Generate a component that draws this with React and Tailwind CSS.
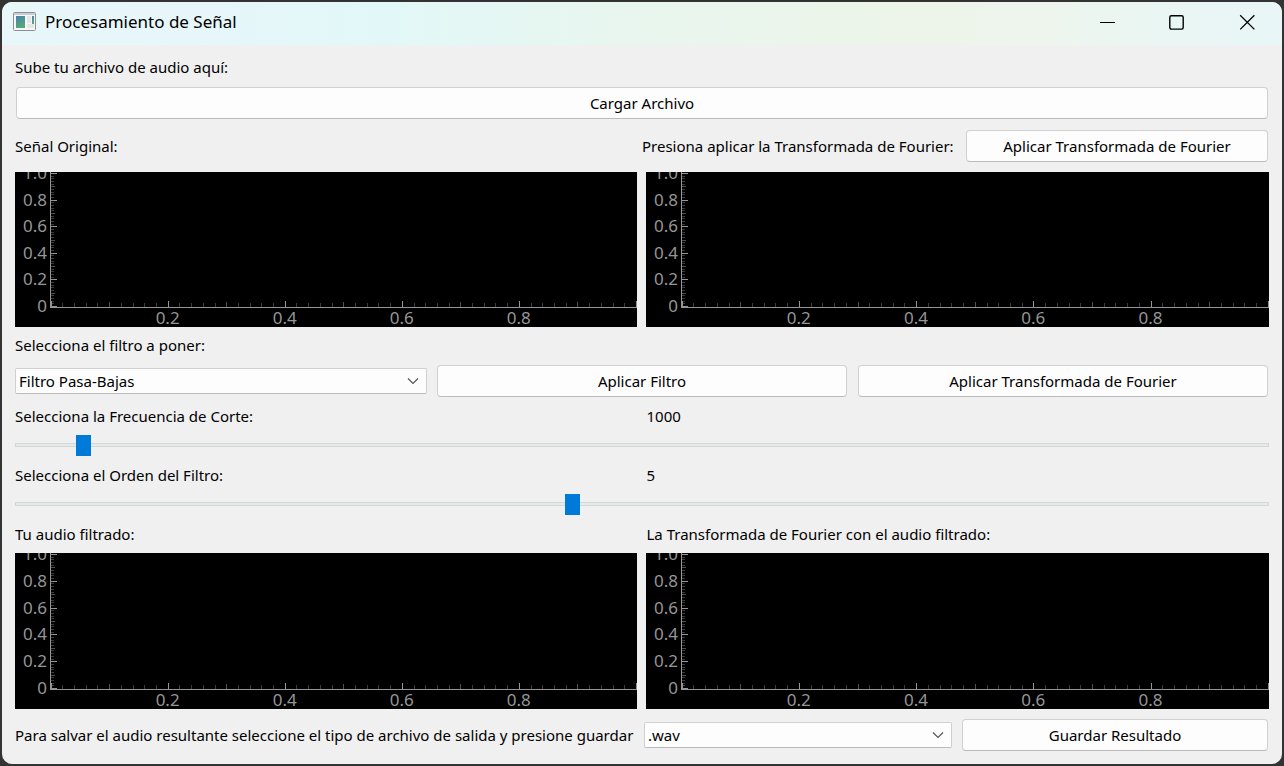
import React, { useState } from "react";

const MINOR = Array.from({ length: 51 }, (_, i) => i);
const LABELS_X = [0.2, 0.4, 0.6, 0.8];
const LABELS_Y = ["0", "0.2", "0.4", "0.6", "0.8", "1.0"];

function tick(i) {
  if (i % 10 === 0) return { size: 6, color: "#969696" };
  if (i % 5 === 0) return { size: 5, color: "#505050" };
  return { size: 4, color: "#3c3c3c" };
}

function Plot({ label, height = 155 }) {
  const axis = height - 20;
  const step = (axis - 2) / 50;
  return (
    <div role="img" aria-label={label} className="flex min-w-0 bg-black">
      <svg className="w-[35px] shrink-0" height={height} fill="#969696" fontSize="17" textAnchor="end">
        {LABELS_Y.map((t, i) => (
          <text key={t} x="32" y={Math.round(axis + 5 - i * 10 * step)}>{t}</text>
        ))}
      </svg>
      <svg className="min-w-0 flex-1 overflow-visible" height={height} shapeRendering="crispEdges">
        {MINOR.map((i) => {
          const t = tick(i);
          const y = Math.round(axis - 1 - i * step);
          return <rect key={i} x="1" y={y} width={t.size - (i % 10 ? 1 : 0)} height="1" fill={t.color} />;
        })}
        {MINOR.map((i) => {
          const t = tick(i);
          return (
            <line key={i} x1={`${i * 1.994 + 0.2}%`} x2={`${i * 1.994 + 0.2}%`} y1={axis - t.size} y2={axis} stroke={t.color} />
          );
        })}
        <rect x="0" y="0" width="1" height={axis + 1} fill="#969696" />
        <rect x="0" y={axis} width="100%" height="1" fill="#969696" />
        <g fill="#969696" fontSize="17" textAnchor="middle">
          {LABELS_X.map((v) => (
            <text key={v} x={`${v * 99.7 + 0.1}%`} y={height - 3}>{v}</text>
          ))}
        </g>
      </svg>
    </div>
  );
}

function Button({ children, className = "" }) {
  return (
    <button
      type="button"
      className={`mx-px h-8 rounded-[4px] border border-[#d0d0d0] border-b-[#bbbbbb] bg-[#fdfdfd] px-2 hover:bg-[#f5f5f5] ${className}`}
    >
      {children}
    </button>
  );
}

function Select({ id, label, options, className = "" }) {
  return (
    <div className={`relative ${className}`}>
      <select
        id={id}
        aria-label={label}
        className="block h-[26px] w-full appearance-none rounded-[2px] border border-[#d0d0d0] border-b-[#bbbbbb] bg-[#fdfdfd] pr-8 pl-[3px]"
      >
        {options.map((o) => (
          <option key={o}>{o}</option>
        ))}
      </select>
      <svg className="pointer-events-none absolute top-2 right-2 h-2.5 w-3" viewBox="0 0 12 10" fill="none" stroke="#555" strokeWidth="1.2">
        <path d="M1 2.5 6 7.5 11 2.5" />
      </svg>
    </div>
  );
}

function Slider({ id, text, min, max, value, onChange }) {
  return (
    <>
      <div className="grid grid-cols-2 gap-[9px]">
        <label htmlFor={id}>{text}</label>
        <output htmlFor={id}>{value}</output>
      </div>
      <input
        id={id}
        type="range"
        min={min}
        max={max}
        value={value}
        onChange={(e) => onChange(Number(e.target.value))}
        className="mt-1.5 mb-2 block h-[21px] w-full appearance-none bg-transparent [&::-webkit-slider-runnable-track]:h-1 [&::-webkit-slider-runnable-track]:border [&::-webkit-slider-runnable-track]:border-[#d3d7d7] [&::-webkit-slider-runnable-track]:bg-[#e7eaea] [&::-webkit-slider-thumb]:-mx-px [&::-webkit-slider-thumb]:-mt-[9px] [&::-webkit-slider-thumb]:h-[21px] [&::-webkit-slider-thumb]:w-[15px] [&::-webkit-slider-thumb]:appearance-none [&::-webkit-slider-thumb]:bg-[#007ad9]"
      />
    </>
  );
}

function TitleBar() {
  return (
    <header className="flex h-[43px] items-center bg-[linear-gradient(90deg,#e8f7f9_0%,#e6f6fa_17%,#e2f8f8_30%,#e8f6ef_48%,#ecf5ea_65%,#eef5ec_80%,#eaf6f3_90%,#e8f6f7_100%)] pb-[3px] pl-[11px]">
      <svg className="h-5 w-6 shrink-0" viewBox="0 0 24 20">
        <defs>
          <linearGradient id="pane" x1="0" y1="0" x2="0.4" y2="1">
            <stop offset="0" stopColor="#4a7fb0" />
            <stop offset="1" stopColor="#55a878" />
          </linearGradient>
        </defs>
        <rect x="0.5" y="0.5" width="22" height="18" rx="1" fill="#f6f6f6" stroke="#8c9096" />
        <rect x="1" y="1" width="21" height="2" fill="#c9ced6" />
        <rect x="3" y="4" width="9" height="12" fill="url(#pane)" />
        <rect x="14" y="4" width="4" height="7" fill="#e6e6e6" />
        <rect x="14" y="12" width="7" height="4" fill="#e6e6e6" />
        <rect x="19" y="4" width="2" height="8" fill="url(#pane)" />
      </svg>
      <h1 className="ml-2 flex-1 truncate text-[17px]">Procesamiento de Señal</h1>
      <button type="button" aria-label="Minimizar" className="flex h-full w-[70px] items-center justify-center">
        <svg className="h-4 w-4" viewBox="0 0 16 16" stroke="#000"><path d="M1 8.5h15" /></svg>
      </button>
      <button type="button" aria-label="Maximizar" className="flex h-full w-[70px] items-center justify-center">
        <svg className="h-4 w-4" viewBox="0 0 16 16" fill="none" stroke="#000" strokeWidth="1.4"><rect x="0.8" y="1.7" width="13.4" height="13.4" rx="1.5" /></svg>
      </button>
      <button type="button" aria-label="Cerrar" className="flex h-full w-[70px] items-center justify-center">
        <svg className="h-4 w-4" viewBox="0 0 16 16" stroke="#000" strokeWidth="1.3"><path d="M1.2 1.2l14.2 14.2M15.4 1.2 1.2 15.4" /></svg>
      </button>
    </header>
  );
}

export default function App() {
  const [cutoff, setCutoff] = useState(1000);
  const [order, setOrder] = useState(5);
  return (
    <div className="flex min-h-screen flex-col bg-[#333333] p-[2px] font-['Noto_Sans','Open_Sans',sans-serif] text-[15px] leading-6 text-black">
      <div className="flex flex-1 flex-col overflow-hidden rounded-[10px] bg-[#f0f0f0]">
        <TitleBar />
        <main className="flex flex-1 flex-col px-[13px] pt-2.5 pb-[13px]">
          <p>Sube tu archivo de audio aquí:</p>
          <Button className="mt-2">Cargar Archivo</Button>
          <div className="mt-[11px] flex items-center">
            <p className="w-1/2">Señal Original:</p>
            <p className="flex-1 whitespace-nowrap">Presiona aplicar la Transformada de Fourier:</p>
            <Button className="w-[302px]">Aplicar Transformada de Fourier</Button>
          </div>
          <div className="mt-2.5 grid grid-cols-[622fr_623fr] gap-[9px]">
            <Plot label="Señal original" />
            <Plot label="Transformada de Fourier" />
          </div>
          <label htmlFor="filtro" className="mt-1.5">Selecciona el filtro a poner:</label>
          <div className="mt-2 mb-[7px] grid grid-cols-3 items-center gap-[9px]">
            <Select id="filtro" options={["Filtro Pasa-Bajas", "Filtro Pasa-Altas", "Filtro Pasa-Banda"]} />
            <Button>Aplicar Filtro</Button>
            <Button>Aplicar Transformada de Fourier</Button>
          </div>
          <Slider id="corte" text="Selecciona la Frecuencia de Corte:" min={20} max={20000} value={cutoff} onChange={setCutoff} />
          <Slider id="orden" text="Selecciona el Orden del Filtro:" min={1} max={10} value={order} onChange={setOrder} />
          <div className="grid grid-cols-2 gap-[9px]">
            <p>Tu audio filtrado:</p>
            <p>La Transformada de Fourier con el audio filtrado:</p>
          </div>
          <div className="mt-[7px] grid grid-cols-[622fr_623fr] gap-[9px]">
            <Plot label="Audio filtrado" height={156} />
            <Plot label="Transformada del audio filtrado" height={156} />
          </div>
          <div className="mt-2.5 flex items-center">
            <label htmlFor="salida" className="w-1/2 whitespace-nowrap">
              Para salvar el audio resultante seleccione el tipo de archivo de salida y presione guardar
            </label>
            <Select id="salida" options={[".wav", ".mp3"]} className="mr-[9px] ml-0.5 flex-1" />
            <Button className="w-[306px]">Guardar Resultado</Button>
          </div>
        </main>
      </div>
    </div>
  );
}
